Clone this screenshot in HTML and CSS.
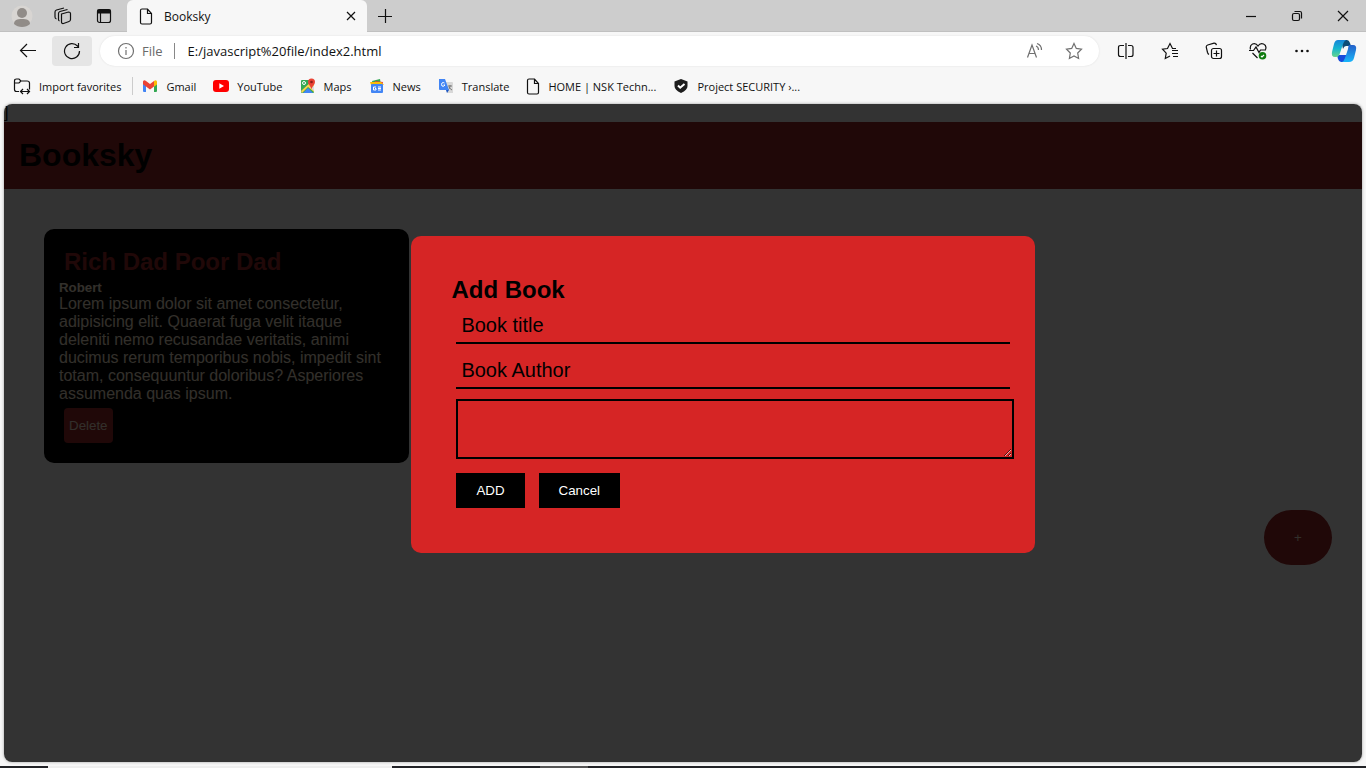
FILE: index.html
```html
<!DOCTYPE html>
<html lang="en">
<head>
<meta charset="utf-8">
<meta name="viewport" content="width=device-width, initial-scale=1">
<title>Booksky</title>
<link rel="stylesheet" href="styles.css">
</head>
<body>
<div class="browser">
  <div class="tabstrip">
    <div class="strip-tools">
      <button class="tool" aria-label="Profile"><svg width="22" height="22" viewBox="0 0 22 22"><circle cx="11" cy="11" r="10.500" fill="#d8d5d2"/><circle cx="11" cy="8" r="5" fill="#918c88"/><path d="M3 19c0-4 3-5 8-5s8 1 8 5c-2 2-5 3-8 3s-6-1-8-3z" fill="#918c88"/></svg></button>
      <button class="tool" aria-label="Workspaces"><svg class="line" width="18" height="18" viewBox="0 0 18 18"><path d="M7.500 7l7-2q2 0 2 1.500v6q0 1.500-1.500 2l-5.500 2q-2 .3-2-1.500z"/><path d="M5.500 14q-1-.3-1-1.500V6.500q0-1.500 1.500-2L13.500 2.500M2.500 12q-1.500-.5-1.500-2V5q0-1.500 1.500-2L10 1"/></svg></button>
      <button class="tool" aria-label="Tab actions"><svg class="line" width="16" height="16" viewBox="0 0 16 16"><rect x="1.500" y="1.500" width="13" height="13" rx="2"/><path d="M2 2h12v3H2z" fill="#111"/><path d="M4.500 5v9"/></svg></button>
    </div>
    <div class="tab">
      <svg class="line" width="14" height="17" viewBox="0 0 14 17"><path d="M1.500 2.500q0-1.500 1.500-1.500h5.500l4 4.500v9q0 1.500-1.500 1.500H3q-1.500 0-1.500-1.500zM8.500 1v4.500h4"/></svg>
      <span class="tab-title">Booksky</span>
      <button class="tool tab-close" aria-label="Close tab"><svg class="line" width="10" height="10" viewBox="0 0 10 10"><path d="M1 1l8 8M9 1L1 9"/></svg></button>
    </div>
    <button class="tool new-tab" aria-label="New tab"><svg class="line" width="14" height="14" viewBox="0 0 14 14"><path d="M0 7.500h14M7.500 0v14"/></svg></button>
    <div class="window-tools">
      <button class="tool" aria-label="Minimize"><svg class="line" width="12" height="12" viewBox="0 0 12 12"><path d="M1 6.500h10"/></svg></button>
      <button class="tool" aria-label="Restore"><svg class="line" width="12" height="12" viewBox="0 0 12 12"><rect x="1.500" y="3.500" width="7" height="7" rx="1.500"/><path d="M3.500 1.500H9q1.500 0 1.500 1.500v5.500"/></svg></button>
      <button class="tool" aria-label="Close window"><svg class="line" width="12" height="12" viewBox="0 0 12 12"><path d="M1 1l10 10M11 1L1 11"/></svg></button>
    </div>
  </div>

  <div class="toolbar">
    <button class="tool back" aria-label="Back"><svg class="line" width="18" height="16" viewBox="0 0 18 16"><path d="M17 7.500H1.500M8 1L1.500 7.500 8 14"/></svg></button>
    <button class="tool reload" aria-label="Refresh"><svg class="line" width="18" height="18" viewBox="0 0 18 18"><path d="M16.500 9A7.500 7.500 0 1 1 14.500 4l1 1M15.500 1v4.500H11"/></svg></button>
    <div class="address">
      <svg class="line muted" width="18" height="18" viewBox="0 0 18 18"><circle cx="9" cy="9" r="7.500"/><path d="M9 8v5M9 5v1.500"/></svg>
      <label class="scheme" for="url">File</label>
      <input class="url" id="url" type="text" value="E:/javascript%20file/index2.html">
      <button class="tool" aria-label="Read aloud"><svg class="line muted" width="18" height="18" viewBox="0 0 18 18"><path d="M2.500 15.500L7 3l4.500 12.500M4 11.500h6M11 4q2.500 1 2.500 4M12 1.500q4.500 1.500 4.500 6.500"/></svg></button>
      <button class="tool" aria-label="Add to favorites"><svg class="line muted" width="18" height="18" viewBox="0 0 18 18"><path d="M9 1.500l2.300 4.900 5.200.8-3.800 3.800.9 5.500L9 14l-4.600 2.500.9-5.500-3.800-3.800 5.200-.8z"/></svg></button>
    </div>
    <div class="actions">
      <button class="tool" aria-label="Split screen"><svg class="line" width="18" height="18" viewBox="0 0 18 18"><path d="M7 3.500H3.500q-2 0-2 2v7q0 2 2 2H7M11 3.500h3q2 0 2 2v7q0 2-2 2h-3M9 1v16"/></svg></button>
      <button class="tool" aria-label="Favorites"><svg class="line" width="18" height="18" viewBox="0 0 18 18"><path d="M15 6.500h-3.500L9 1.500 6.500 6.500 1.500 7.200l3.700 4-.9 5.300L9 14M11 8.500h6M11 11.500h6M12 14.500h5"/></svg></button>
      <button class="tool" aria-label="Collections"><svg class="line" width="18" height="18" viewBox="0 0 18 18"><rect x="6.500" y="6.500" width="10" height="10" rx="2"/><path d="M11.500 8.500v6M8.500 11.500h6M4 12.500q-1-.5-1.500-2L1.200 5q0-1.500 1.500-2L9 1.200q2-.2 2.500 2"/></svg></button>
      <button class="tool" aria-label="Browser essentials"><svg class="line" width="18" height="18" viewBox="0 0 18 18"><path d="M1.500 7.500q-1-4 2-5.500Q7 .8 9 4q2-3.200 5.500-2 3.500 1.500 2 5.500M0 8.500h4.500L7 5l3 5.500 1.500-2.500H17M3.500 11l5 5"/><circle cx="13.500" cy="13.800" r="3.800" fill="#107c10" stroke="none"/><path d="M12 14l1 1 2-2" stroke="#fff"/></svg></button>
      <button class="tool" aria-label="Settings and more"><svg width="18" height="18" viewBox="0 0 18 18"><g fill="#111"><circle cx="3.500" cy="9" r="1.300"/><circle cx="9" cy="9" r="1.300"/><circle cx="14.500" cy="9" r="1.300"/></g></svg></button>
    </div>
    <button class="tool copilot" aria-label="Copilot"><svg width="26" height="24" viewBox="0 0 26 24">
      <defs><linearGradient id="cp-left" x2="0" y2="1"><stop stop-color="#1684d8"/><stop offset=".5" stop-color="#16b5cf"/><stop offset="1" stop-color="#66d68c"/></linearGradient><linearGradient id="cp-right" x2="0" y2="1"><stop stop-color="#2460c9"/><stop offset="1" stop-color="#18b6fa"/></linearGradient></defs>
      <path d="M6 16h10l-3 7h-3q-2 0-3-3z" fill="#184bdb"/>
      <path d="M10 1h6q2 0 3 3l1 3h-5q-2 0-3 3z" fill="#0c4c77"/>
      <path d="M7 1h8q-2 1-3 4l-3 9q-1 4-4 4H4q-4 0-3-5L3 5q1-4 4-4z" fill="url(#cp-left)"/>
      <path d="M18 6h4q4 0 3 5l-2 8q-1 4-5 4h-7q2-1 3-4l3-9q.5-4 1-4z" fill="url(#cp-right)"/>
    </svg></button>
  </div>

  <nav class="bookmarks" aria-label="Favorites bar">
    <a class="bookmark import" href="#"><svg class="line" width="18" height="18" viewBox="0 0 18 18"><path d="M6 14.500H3.500q-2 0-2-2V4q0-2 2-2H6l2 2-2 2H1.500M8 4h6q2.500 0 2.500 2v6.500M8 14.500h8M10 12l-2.500 2.500L10 17M14 12l2.500 2.500L14 17"/></svg>Import favorites</a>
    <a class="bookmark" href="#"><svg width="16" height="16" viewBox="0 0 16 16"><path d="M1 3.500l3 2V14H2q-1 0-1-1z" fill="#4285f4"/><path d="M12 5.500l3-2V13q0 1-1 1h-2z" fill="#34a853"/><path d="M1 3.500Q2 1.500 4 3l4 3 4-3v5.500l-4 3-4-3-3-2.200z" fill="#ea4335"/><path d="M12 3q2-1.500 3 .5v3l-3 2.200z" fill="#fbbc04"/></svg>Gmail</a>
    <a class="bookmark" href="#"><svg width="16" height="16" viewBox="0 0 16 16"><rect y="2" width="16" height="12" rx="3" fill="#f00"/><path d="M6.300 5.300v5.400L11 8z" fill="#fff"/></svg>YouTube</a>
    <a class="bookmark" href="#"><svg width="16" height="16" viewBox="0 0 16 16"><rect x="1" y="2" width="13" height="13" rx="1" fill="#34a853"/><path d="M1 13L12 3l2 1v10L8 9l-6 6z" fill="#fbd34d"/><path d="M3 15l5-5 5 5z" fill="#4285f4"/><path d="M10 9l4 4V8z" fill="#ddd"/><circle cx="4" cy="5" r="1.500" fill="none" stroke="#fff"/><path d="M8 4a3.500 3.500 0 0 1 7 0q0 2-2 4l-1.500 3L10 8Q8 6 8 4z" fill="#ea4335"/><circle cx="11.500" cy="4" r="1.300" fill="#8b1c18"/></svg>Maps</a>
    <a class="bookmark" href="#"><svg width="16" height="16" viewBox="0 0 16 16"><path d="M3 3l8-2 1 6H4z" fill="#34a853"/><path d="M6 3l8 1-1 5H6z" fill="#ea4335"/><path d="M1 4h11l3 3H2z" fill="#fbbc04"/><rect x="2" y="6" width="12" height="9" rx="1" fill="#4285f4"/><path d="M7 9H4.500v3H7v-1.500H6M9 9h3M9 10.500h3M9 12h3" fill="none" stroke="#fff"/></svg>News</a>
    <a class="bookmark" href="#"><svg width="16" height="16" viewBox="0 0 16 16"><path d="M7 4h7q1 0 1 1v10H9z" fill="#d8d8d8"/><path d="M10 8h4M12 7v1q0 3-2 4M11 9q1 2 3 3" stroke="#777" fill="none"/><path d="M1 1h6l4 11H2q-1 0-1-1z" fill="#4285f4"/><path d="M8 12h3l-2 3z" fill="#1a56c4"/><path d="M6.500 5Q5 4 4 5t0 3q2 1 3-1H5.500" stroke="#fff" fill="none"/></svg>Translate</a>
    <a class="bookmark" href="#"><svg class="line" width="14" height="17" viewBox="0 0 14 17"><path d="M1.500 2.500q0-1.500 1.500-1.500h5.500l4 4.500v9q0 1.500-1.500 1.500H3q-1.500 0-1.500-1.500zM8.500 1v4.500h4"/></svg>HOME | NSK Techn...</a>
    <a class="bookmark" href="#"><svg width="16" height="16" viewBox="0 0 16 16"><path d="M8 1l6.500 2.500V8q0 4-6.500 7-6.500-3-6.500-7V3.500z" fill="#1d1d1d"/><path d="M5 7.500l2.200 2.200L11.500 6" fill="none" stroke="#fff" stroke-width="2"/></svg>Project SECURITY ›...</a>
  </nav>

  <div class="viewport">
    <div class="stray">]</div>
    <header class="site-header"><h1>Booksky</h1></header>
    <main class="container">
      <article class="card">
        <h2>Rich Dad Poor Dad</h2>
        <h5>Robert</h5>
        <p>Lorem ipsum dolor sit amet consectetur, adipisicing elit. Quaerat fuga velit itaque deleniti nemo recusandae veritatis, animi ducimus rerum temporibus nobis, impedit sint totam, consequuntur doloribus? Asperiores assumenda quas ipsum.</p>
        <button class="delete">Delete</button>
      </article>
    </main>
    <button class="add-button" aria-label="Open add book form">+</button>
    <div class="overlay"></div>
    <section class="popup" role="dialog" aria-labelledby="popup-title">
      <h2 id="popup-title">Add Book</h2>
      <form class="book-form">
        <input type="text" placeholder="Book title" aria-label="Book title">
        <input type="text" placeholder="Book Author" aria-label="Book Author">
        <textarea aria-label="Book description"></textarea>
        <div class="form-actions">
          <button type="button">ADD</button>
          <button type="button">Cancel</button>
        </div>
      </form>
    </section>
  </div>
  <div class="taskbar"><span class="task-search"></span><span class="task-active"></span></div>
</div>
</body>
</html>
```
FILE: styles.css
```css
* { margin: 0; padding: 0; }
body {
  font-family: "Open Sans", "Noto Sans", sans-serif;
  font-size: 12px;
  color: #111;
}
a { color: inherit; text-decoration: none; }
button { border: 0; font-family: inherit; }

.browser {
  display: flex;
  flex-direction: column;
  height: 100vh;
  background: #f7f7f7;
}
.line { fill: none; stroke: #111; stroke-width: 1.2; }
.muted { stroke: #707070; }
.tool {
  display: flex;
  align-items: center;
  justify-content: center;
  background: none;
  color: inherit;
}
svg { flex: none; }

/* Tab strip */
.tabstrip {
  display: flex;
  height: 32px;
  background: #cdcdcd;
  box-shadow: inset 0 -1px #c0c0c0;
}
.strip-tools {
  display: flex;
  align-items: center;
  gap: 19px;
  width: 127px;
  padding-left: 11px;
  box-sizing: border-box;
}
.strip-tools .tool { width: 22px; }
.tab {
  display: flex;
  align-items: center;
  gap: 11px;
  width: 240px;
  padding: 0 11px 0 12px;
  box-sizing: border-box;
  background: #f7f7f7;
  border-radius: 6px 6px 0 0;
}
.tab-title { flex: 1; }
.new-tab { width: 36px; }
.window-tools { display: flex; margin-left: auto; }
.window-tools .tool { width: 46px; }

/* Toolbar */
.toolbar {
  display: flex;
  align-items: center;
  height: 38px;
  padding: 0 9px 0 8px;
}
.back { width: 40px; height: 30px; }
.reload {
  width: 40px;
  height: 30px;
  margin-left: 4px;
  background: #e5e5e5;
  border-radius: 4px;
}
.address {
  display: flex;
  align-items: center;
  flex: 1;
  height: 30px;
  margin-left: 8px;
  padding: 0 16px 0 17px;
  background: #fff;
  border-radius: 15px;
  box-shadow: 0 0 2px #ddd;
  font-size: 13px;
}
.scheme {
  margin-left: 7px;
  padding-right: 11px;
  border-right: 1px solid #888;
  line-height: 16px;
  color: #6a6a6a;
}
.url {
  flex: 1;
  min-width: 0;
  margin-left: 13px;
  border: 0;
  outline: 0;
  background: none;
  font: inherit;
  color: #111;
}
.address .tool + .tool { margin-left: 22px; }
.actions {
  display: flex;
  gap: 26px;
  margin: 0 20px 0 18px;
}

/* Favorites bar */
.bookmarks {
  display: flex;
  align-items: center;
  gap: 17px;
  height: 34px;
  padding: 0 13px 2px;
  box-sizing: border-box;
  font-size: 11px;
}
.bookmark {
  display: flex;
  align-items: center;
  gap: 8px;
  white-space: nowrap;
}
.import {
  padding-right: 11px;
  border-right: 1px solid #ccc;
  margin-right: -8px;
}

/* Page */
.viewport {
  position: relative;
  flex: 1;
  margin: 0 4px 4px;
  overflow: hidden;
  background: #fff;
  border-radius: 8px;
  box-shadow: 0 0 3px #999;
  font-family: "Liberation Sans", Arial, sans-serif;
  font-size: 16px;
  line-height: 18px;
}
.site-header { padding: 15px; background: #a02828; }
.site-header h1 { font-size: 32px; line-height: 37px; color: #000; }
.container { padding: 40px; }
.card {
  width: 335px;
  padding: 15px;
  background: #000;
  border-radius: 10px;
  color: antiquewhite;
}
.card h2 { margin: 5px; font-size: 24px; line-height: 26px; color: #a02828; }
.card h5 { line-height: 15px; }
.delete {
  display: block;
  height: 35px;
  margin: 5px;
  padding: 0 5px;
  background: #a02828;
  border-radius: 4px;
  color: antiquewhite;
}
.add-button {
  position: absolute;
  right: 30px;
  bottom: 30%;
  width: 68px;
  height: 55px;
  background: #a02828;
  border-radius: 30px;
  color: antiquewhite;
}
.overlay {
  position: absolute;
  inset: 0;
  background: #000;
  opacity: 0.8;
}
.popup {
  position: absolute;
  top: 20%;
  left: 30%;
  width: 40%;
  padding: 40px;
  background: #d62525;
  border-radius: 10px;
  color: #000;
}
.popup h2 { font-size: 24px; line-height: 28px; }
.book-form {
  display: flex;
  flex-direction: column;
  gap: 10px;
  padding: 5px 0;
  margin: 0 -19px 0 5px;
}
.book-form input {
  height: 23px;
  margin-right: 4px;
  padding: 5px;
  border: 0;
  border-bottom: 2px solid #000;
  outline: 0;
  background: none;
  font: 20px "Liberation Sans", Arial, sans-serif;
}
.book-form input::placeholder { color: #000; opacity: 1; }
.book-form textarea {
  height: 46px;
  padding: 5px;
  border: 2px solid #000;
  outline: 0;
  background: none;
}
.form-actions { display: flex; gap: 14px; margin-top: 4px; }
.form-actions button {
  height: 35px;
  padding: 0 20px;
  background: #000;
  color: #fff;
}

/* Taskbar edge */
.taskbar { display: flex; height: 2px; background: #222327; }
.task-search { width: 344px; margin-left: 48px; background: #eee; }
.task-active { width: 48px; margin-left: 148px; background: #555; }
```
